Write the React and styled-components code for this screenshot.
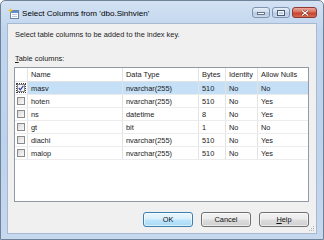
import React from "react"
import styled, { createGlobalStyle } from "styled-components"

const GlobalStyle = createGlobalStyle`
  html, body {
    margin: 0;
    padding: 0;
    background: #fff;
  }
  body {
    font-family: "Liberation Sans", Arial, sans-serif;
    font-size: 7.4px;
    color: #1b1b1b;
  }
`

const Window = styled.div`
  width: 324px;
  height: 240px;
  box-sizing: border-box;
  display: flex;
  flex-direction: column;
  border: 1px solid #6f8298;
  border-radius: 5px 5px 0 0;
  background: linear-gradient(180deg, #d3e2f3 0%, #c0d5ee 12%, #bdd2ec 60%, #c6d8ee 100%);
  overflow: hidden;
`

const TitleBar = styled.div`
  height: 22px;
  display: flex;
  align-items: flex-start;
  padding: 0 6px 0 7px;
  flex-shrink: 0;
`

const TitleIcon = styled.svg`
  width: 11px;
  height: 11px;
  margin: 7px 3px 0 0;
  flex-shrink: 0;
`

const TitleText = styled.div`
  font-size: 8.1px;
  color: #000;
  line-height: 10px;
  margin-top: 8px;
  flex: 1;
  white-space: nowrap;
`

const CaptionGroup = styled.div`
  display: flex;
  gap: 2px;
  margin-top: 6px;
`

const CaptionButton = styled.div`
  width: ${(p) => (p.close ? 25 : 18)}px;
  height: 11px;
  box-sizing: border-box;
  border: 1px solid ${(p) => (p.close ? "#8d3a35" : "#7e93ae")};
  border-radius: 3px;
  display: flex;
  align-items: center;
  justify-content: center;
  background: ${(p) =>
    p.close
      ? "linear-gradient(180deg, #e9a99b 0%, #d7705f 45%, #c7432c 55%, #d36b50 100%)"
      : "linear-gradient(180deg, #e6eef8 0%, #ccdbee 45%, #b6c9e2 55%, #c9d9ee 100%)"};
`

const Client = styled.div`
  flex: 1;
  position: relative;
  margin: 0 6px 5px 6px;
  border: 1px solid #a6b9d0;
  background: #f0f0f0;
  padding: 6px 7px 0 6px;
  display: flex;
  flex-direction: column;
`

const Label = styled.div`
  line-height: 10px;
  margin: ${(p) => p.margin || "0"};
  padding-left: 1px;
  white-space: nowrap;
  color: #222;
  u {
    text-decoration: underline;
  }
`

const Grid = styled.div`
  height: 135px;
  box-sizing: border-box;
  border: 1px solid #8f9aa6;
  background: #fff;
  margin-top: 3px;
`

const Row = styled.div`
  display: grid;
  grid-template-columns: 13px 95px 76px 27px 32px 1fr;
  height: ${(p) => (p.header ? 14 : 13)}px;
  box-sizing: border-box;
  border-bottom: 1px solid ${(p) => (p.header ? "#e2e2e2" : "#ececec")};
`

const Cell = styled.div`
  box-sizing: border-box;
  border-right: ${(p) => (p.last ? "none" : "1px solid #e3e3e3")};
  padding-left: 3px;
  display: flex;
  align-items: center;
  white-space: nowrap;
  overflow: hidden;
  color: ${(p) => (p.header ? "#222" : "#1b1b1b")};
  background: ${(p) => (p.selected ? "#c5dff7" : "transparent")};
`

const CheckCell = styled.div`
  box-sizing: border-box;
  border-right: 1px solid #e3e3e3;
  display: flex;
  align-items: center;
  justify-content: center;
  padding: 1px;
`

const Focus = styled.div`
  width: 100%;
  height: 100%;
  box-sizing: border-box;
  display: flex;
  align-items: center;
  justify-content: center;
  border: 1px dotted ${(p) => (p.on ? "#3b3b3b" : "transparent")};
`

const Box = styled.div`
  width: 8px;
  height: 8px;
  box-sizing: border-box;
  border: 1px solid #8a8a8a;
  background: ${(p) =>
    p.checked ? "#f4f6fb" : "linear-gradient(135deg, #d8d8d8 0%, #eeeeee 60%, #f8f8f8 100%)"};
  display: flex;
  align-items: center;
  justify-content: center;
`

const ButtonRow = styled.div`
  display: flex;
  justify-content: flex-end;
  gap: 8px;
  margin-top: 10px;
`

const Button = styled.div`
  width: 50px;
  height: 15px;
  box-sizing: border-box;
  border: 1px solid ${(p) => (p.primary ? "#3c7fb1" : "#707070")};
  border-radius: 3px;
  display: flex;
  align-items: center;
  justify-content: center;
  color: #111;
  background: ${(p) =>
    p.primary
      ? "linear-gradient(180deg, #eaf6fd 0%, #d9f0fc 48%, #bee6fd 52%, #a7d9f5 100%)"
      : "linear-gradient(180deg, #f2f2f2 0%, #ebebeb 48%, #dddddd 52%, #cfcfcf 100%)"};
  box-shadow: inset 0 0 0 1px rgba(255, 255, 255, 0.6);
  u {
    text-decoration: underline;
  }
`

const Grip = styled.svg`
  position: absolute;
  right: 1px;
  bottom: 1px;
  width: 7px;
  height: 7px;
`

const columns = ["Name", "Data Type", "Bytes", "Identity", "Allow Nulls"]

const rows = [
  { name: "masv", type: "nvarchar(255)", bytes: "510", identity: "No", nulls: "No", checked: true },
  { name: "hoten", type: "nvarchar(255)", bytes: "510", identity: "No", nulls: "Yes" },
  { name: "ns", type: "datetime", bytes: "8", identity: "No", nulls: "Yes" },
  { name: "gt", type: "bit", bytes: "1", identity: "No", nulls: "No" },
  { name: "diachi", type: "nvarchar(255)", bytes: "510", identity: "No", nulls: "Yes" },
  { name: "malop", type: "nvarchar(255)", bytes: "510", identity: "No", nulls: "Yes" },
]

const Icon = () => (
  <TitleIcon viewBox="0 0 11 11">
    <rect x="2.5" y="2.5" width="8" height="8" fill="#fff" stroke="#6b84a8" />
    <rect x="3" y="3" width="7" height="2" fill="#5f8fd0" />
    <rect x="4" y="6" width="5" height="1" fill="#b9c7da" />
    <rect x="4" y="8" width="5" height="1" fill="#b9c7da" />
    <path d="M2.5 0 L3.2 1.8 L5 2.5 L3.2 3.2 L2.5 5 L1.8 3.2 L0 2.5 L1.8 1.8 Z" fill="#f2c21b" />
  </TitleIcon>
)

const Caption = () => (
  <CaptionGroup>
    <CaptionButton>
      <svg width="8" height="5" viewBox="0 0 8 5">
        <rect x="0.5" y="2.5" width="7" height="2" fill="#fff" stroke="#4a5a70" strokeWidth="0.8" />
      </svg>
    </CaptionButton>
    <CaptionButton>
      <svg width="8" height="6" viewBox="0 0 8 6">
        <rect x="0.5" y="0.5" width="7" height="5" fill="none" stroke="#4a5a70" strokeWidth="1" />
        <rect x="1.5" y="1.5" width="5" height="3" fill="none" stroke="#fff" strokeWidth="0.8" />
      </svg>
    </CaptionButton>
    <CaptionButton close>
      <svg width="8" height="6" viewBox="0 0 8 6">
        <path d="M1 0.5 L7 5.5 M7 0.5 L1 5.5" stroke="#6b2019" strokeWidth="2.2" />
        <path d="M1 0.5 L7 5.5 M7 0.5 L1 5.5" stroke="#fff" strokeWidth="1.2" />
      </svg>
    </CaptionButton>
  </CaptionGroup>
)

const Check = ({ checked }) => (
  <Box checked={checked}>
    {checked && (
      <svg width="6" height="6" viewBox="0 0 6 6">
        <path d="M0.8 3 L2.4 4.8 L5.3 0.8" fill="none" stroke="#34449a" strokeWidth="1.2" />
      </svg>
    )}
  </Box>
)

const App = () => {
  return (
    <>
      <GlobalStyle />
      <Window>
        <TitleBar>
          <Icon />
          <TitleText>Select Columns from 'dbo.Sinhvien'</TitleText>
          <Caption />
        </TitleBar>
        <Client>
          <Label>Select table columns to be added to the index key.</Label>
          <Label margin="14px 0 0 0">
            <u>T</u>able columns:
          </Label>
          <Grid>
            <Row header>
              <CheckCell />
              {columns.map((c, i) => (
                <Cell header key={c} last={i === columns.length - 1}>
                  {c}
                </Cell>
              ))}
            </Row>
            {rows.map((r) => (
              <Row key={r.name}>
                <CheckCell>
                  <Focus on={r.checked}>
                    <Check checked={r.checked} />
                  </Focus>
                </CheckCell>
                <Cell selected={r.checked}>{r.name}</Cell>
                <Cell selected={r.checked}>{r.type}</Cell>
                <Cell selected={r.checked}>{r.bytes}</Cell>
                <Cell selected={r.checked}>{r.identity}</Cell>
                <Cell selected={r.checked} last>
                  {r.nulls}
                </Cell>
              </Row>
            ))}
          </Grid>
          <ButtonRow>
            <Button primary>OK</Button>
            <Button>Cancel</Button>
            <Button>
              <span>
                <u>H</u>elp
              </span>
            </Button>
          </ButtonRow>
          <Grip viewBox="0 0 7 7">
            {[
              [5, 1],
              [3, 3],
              [5, 3],
              [1, 5],
              [3, 5],
              [5, 5],
            ].map(([x, y]) => (
              <rect key={`${x}-${y}`} x={x} y={y} width="1" height="1" fill="#a8b4c2" />
            ))}
          </Grip>
        </Client>
      </Window>
    </>
  )
}

export default App
